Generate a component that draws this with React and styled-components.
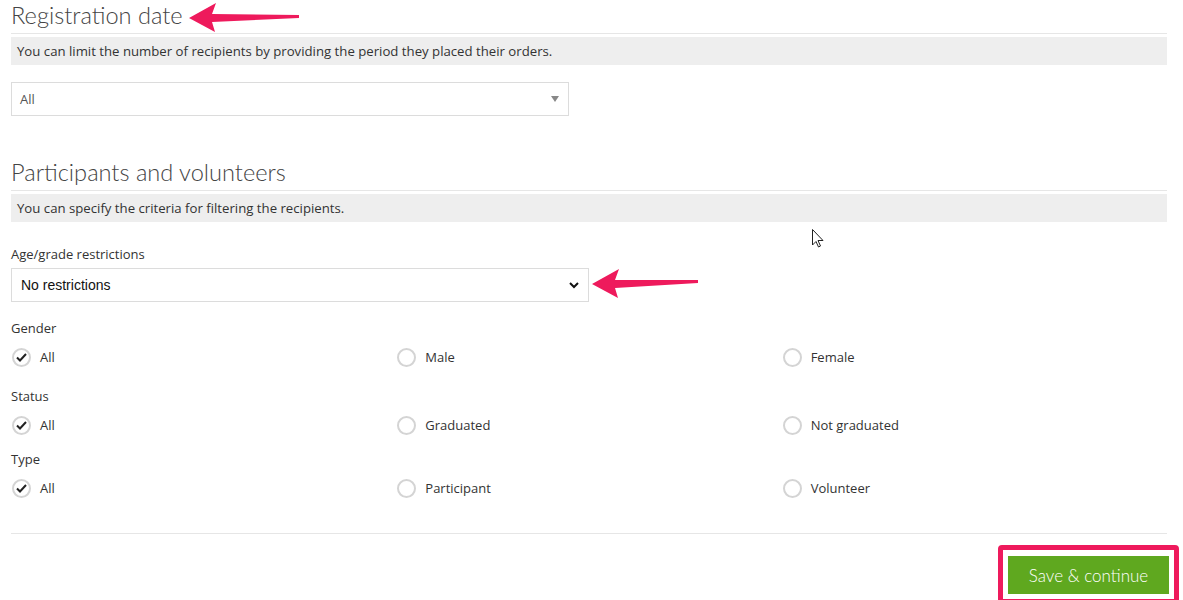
import React from 'react';
import styled, { createGlobalStyle } from 'styled-components';

const GlobalStyle = createGlobalStyle`
  body {
    margin: 0;
    background: #fff;
    font-family: "Open Sans", Lato, sans-serif;
    color: #333;
  }
`;

const Page = styled.div`
  position: relative;
  box-sizing: border-box;
  width: 1183px;
  padding: 0 16px 0 11px;
  height: 600px;
  overflow: hidden;
`;

const Heading = styled.h2`
  margin: ${p => p.$top || 0}px 0 0;
  padding: 2px 0 0;
  height: 31px;
  line-height: 26px;
  font-family: Lato, sans-serif;
  font-size: 23.6px;
  font-weight: 300;
  color: #444;
  border-bottom: 1px solid #e6e6e6;
`;

const Notice = styled.div`
  margin-top: 3px;
  height: 28px;
  line-height: 28px;
  padding: 0 6px;
  background: #eeeeee;
  font-size: 13.2px;
  color: #333;
`;

const FakeSelect = styled.div`
  box-sizing: border-box;
  margin-top: ${p => p.$top || 0}px;
  width: ${p => p.$width}px;
  height: 34px;
  border: 1px solid #dcdcdc;
  display: flex;
  align-items: center;
  justify-content: space-between;
  padding: 0 9px 0 ${p => p.$pad || 8}px;
  font-size: ${p => p.$native ? '14px' : '13px'};
  font-family: ${p => p.$native ? '"Liberation Sans", Arial, sans-serif' : '"Open Sans", sans-serif'};
  color: ${p => p.$native ? '#111' : '#555'};
`;

const Label = styled.div`
  margin-top: ${p => p.$top || 0}px;
  height: 18px;
  line-height: 18px;
  font-size: 13px;
  color: #333;
`;

const RadioRow = styled.div`
  margin-top: 10px;
  display: grid;
  grid-template-columns: repeat(3, 1fr);
  height: 20px;
`;

const Option = styled.label`
  display: flex;
  align-items: center;
  gap: 9px;
  font-size: 13px;
  color: #333;
`;

const Circle = styled.span`
  box-sizing: border-box;
  width: 19px;
  height: 19px;
  margin-left: 1px;
  border-radius: 50%;
  border: 2px solid #d4d4d4;
  display: flex;
  align-items: center;
  justify-content: center;
`;

const Divider = styled.div`
  margin-top: 35px;
  border-top: 1px solid #e6e6e6;
`;

const Footer = styled.div`
  display: flex;
  justify-content: flex-end;
  margin-top: 11px;
  margin-right: -12px;
`;

const Highlight = styled.div`
  border: 5px solid #ee1a5c;
  border-radius: 4px;
  padding: 6px 5px 5px;
`;

const SaveButton = styled.button`
  width: 161px;
  height: 38px;
  border: none;
  background: #5fa81f;
  color: #fff;
  font-family: Lato, sans-serif;
  font-weight: 300;
  font-size: 17px;
  cursor: pointer;
`;

const Overlay = styled.svg`
  position: absolute;
  left: 0;
  top: 0;
  pointer-events: none;
`;

function Radio({ checked, children }) {
  return (
    <Option>
      <Circle>
        {checked && (
          <svg width="11" height="9" viewBox="0 0 11 9">
            <path d="M1 4.5 L4 7.5 L10 1" fill="none" stroke="#222" strokeWidth="2" />
          </svg>
        )}
      </Circle>
      {children}
    </Option>
  );
}

function Group({ label, top, options }) {
  return (
    <>
      <Label $top={top}>{label}</Label>
      <RadioRow>
        {options.map((o, i) => (
          <Radio key={o} checked={i === 0}>{o}</Radio>
        ))}
      </RadioRow>
    </>
  );
}

function Arrow({ tipX, tipY, endX, endY }) {
  const hx = tipX + 27;
  return (
    <path
      d={`M${tipX} ${tipY} L${hx} ${tipY - 15} L${hx - 4} ${tipY - 4} L${endX} ${endY - 2} L${endX} ${endY + 1} L${hx - 4} ${tipY + 4} L${hx - 1} ${tipY + 14} Z`}
      fill="#ee1a5c"
    />
  );
}

export default function App() {
  return (
    <>
      <GlobalStyle />
      <Page>
        <Heading>Registration date</Heading>
        <Notice>You can limit the number of recipients by providing the period they placed their orders.</Notice>
        <FakeSelect $top={17} $width={558}>
          All
          <svg width="8" height="6" viewBox="0 0 8 6">
            <path d="M0 0 L8 0 L4 6 Z" fill="#888" />
          </svg>
        </FakeSelect>

        <Heading $top={41}>Participants and volunteers</Heading>
        <Notice>You can specify the criteria for filtering the recipients.</Notice>

        <Label $top={23}>Age/grade restrictions</Label>
        <FakeSelect $top={5} $width={578} $native $pad={9}>
          No restrictions
          <svg width="10" height="7" viewBox="0 0 10 7">
            <path d="M1 1 L5 5 L9 1" fill="none" stroke="#111" strokeWidth="2" />
          </svg>
        </FakeSelect>

        <Group label="Gender" top={17} options={['All', 'Male', 'Female']} />
        <Group label="Status" top={20} options={['All', 'Graduated', 'Not graduated']} />
        <Group label="Type" top={15} options={['All', 'Participant', 'Volunteer']} />

        <Divider />
        <Footer>
          <Highlight>
            <SaveButton>Save &amp; continue</SaveButton>
          </Highlight>
        </Footer>

        <Overlay width="1183" height="600">
          <Arrow tipX={189} tipY={18} endX={299} endY={17} />
          <Arrow tipX={592} tipY={284} endX={698} endY={282} />
          <path
            d="M812.5 229.5 L812.5 245 L816 241.5 L818.5 247 L820.5 246 L818 240.5 L823 240.5 Z"
            fill="#fff"
            stroke="#222"
            strokeWidth="1"
          />
        </Overlay>
      </Page>
    </>
  );
}
